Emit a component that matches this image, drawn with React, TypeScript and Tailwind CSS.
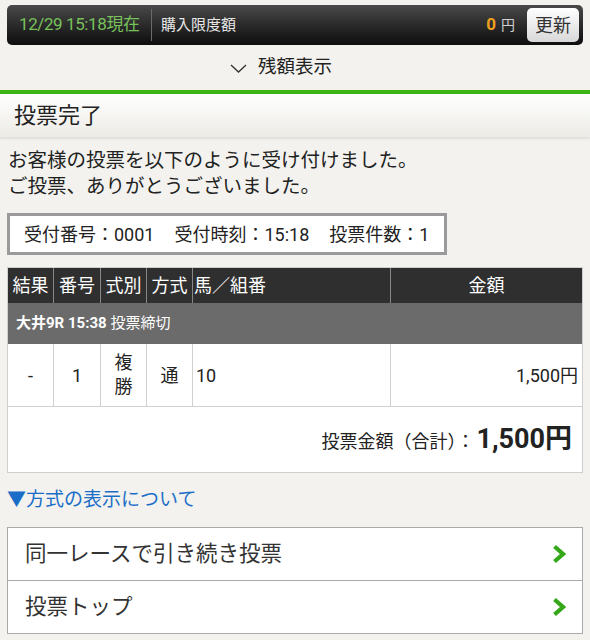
const font = { fontFamily: 'Roboto, "Noto Sans CJK JP", sans-serif' };

function Chevron() {
  return (
    <svg width="14" height="20" viewBox="0 0 14 20" className="shrink-0">
      <path d="M2.5 2.5 L11 10 L2.5 17.5" fill="none" stroke="#35a81a" strokeWidth="4.2" strokeLinejoin="miter" />
    </svg>
  );
}

function DownCaret() {
  return (
    <svg width="17" height="9" viewBox="0 0 17 9" className="shrink-0 mt-[1px]">
      <path d="M1 1 L8.5 8 L16 1" fill="none" stroke="#333" strokeWidth="1.3" />
    </svg>
  );
}

export default function App() {
  return (
    <div className="w-[590px] h-[640px] overflow-hidden bg-[#f3f2ee] text-[#222]" style={font}>
      {/* balance bar */}
      <div className="px-[7px] pt-[5px]">
        <div className="flex items-center h-[40px] rounded-[5px] bg-gradient-to-b from-[#4a4a4a] to-[#0e0e0e]">
          <div className="w-[144px] pl-[12px] text-[17px] text-[#78c15a] tracking-[-0.4px] whitespace-nowrap">12/29 15:18現在</div>
          <div className="w-px h-[32px] bg-[#6a6a6a]" />
          <div className="flex-1 pl-[9px] text-[15px] text-[#e6e6e6]">購入限度額</div>
          <div className="text-[17px] font-bold text-[#f0a020]">0</div>
          <div className="ml-[5px] text-[14px] text-[#cfcfcf]">円</div>
          <div className="ml-[12px] mr-[4px] w-[52px] h-[34px] rounded-[5px] bg-gradient-to-b from-white to-[#d8d8d8] flex items-center justify-center text-[18px] text-[#333]">
            更新
          </div>
        </div>
      </div>
      <div className="h-[45px] flex items-center justify-center gap-[11px] pr-[28px] text-[18.5px] text-[#222]">
        <DownCaret />
        <span>残額表示</span>
      </div>

      {/* heading */}
      <div className="h-[4px] bg-[#3cb414]" />
      <div className="h-[43px] flex items-center pl-[14px] text-[22px] text-[#222] bg-gradient-to-b from-white to-[#ecebe6] shadow-[0_2px_2px_rgba(0,0,0,0.08)]">
        投票完了
      </div>

      <div className="px-[7px]">
        <p className="pt-[11px] pl-[1px] text-[19.5px] leading-[26px]">
          お客様の投票を以下のように受け付けました。
          <br />
          ご投票、ありがとうございました。
        </p>

        <div className="mt-[13px] w-[440px] h-[42px] border-[3px] border-[#9a9a9a] bg-white flex items-center pl-[14px] text-[18px] gap-[20px]">
          <span>受付番号：0001</span>
          <span>受付時刻：15:18</span>
          <span>投票件数：1</span>
        </div>

        {/* table */}
        <div className="mt-[12px] border border-[#cfcfcf] bg-white">
          <div className="grid grid-cols-[46px_47px_46px_46px_198px_1fr] h-[35px] bg-[#2f2f2f] text-white text-[18px]">
            <div className="flex items-center justify-center border-r border-[#888]">結果</div>
            <div className="flex items-center justify-center border-r border-[#888]">番号</div>
            <div className="flex items-center justify-center border-r border-[#888]">式別</div>
            <div className="flex items-center justify-center border-r border-[#888]">方式</div>
            <div className="flex items-center pl-[1px] border-r border-[#888]">馬／組番</div>
            <div className="flex items-center justify-center">金額</div>
          </div>
          <div className="h-[41px] bg-[#6b6b6b] text-white text-[15px] flex items-center pl-[8px]">
            <span className="font-bold">大井9R 15:38</span>
            <span className="ml-[4px]">投票締切</span>
          </div>
          <div className="grid grid-cols-[46px_47px_46px_46px_198px_1fr] h-[63px] text-[18px] border-b border-[#d0d0d0]">
            <div className="flex items-center justify-center border-r border-[#d0d0d0]">-</div>
            <div className="flex items-center justify-center border-r border-[#d0d0d0]">1</div>
            <div className="flex items-center justify-center text-center leading-[24px] border-r border-[#d0d0d0]">
              複<br />勝
            </div>
            <div className="flex items-center justify-center border-r border-[#d0d0d0]">通</div>
            <div className="flex items-center pl-[3px] border-r border-[#d0d0d0]">10</div>
            <div className="flex items-center justify-end pr-[4px]">1,500円</div>
          </div>
          <div className="h-[65px] flex items-center justify-end pr-[10px]">
            <span className="text-[18px] mt-[3px]">投票金額（合計）：</span>
            <span className="text-[27px] font-bold ml-[2px]">1,500円</span>
          </div>
        </div>

        <div className="mt-[12px] h-[30px] flex items-center text-[19px] text-[#1b6ec8]">▼方式の表示について</div>

        {/* links */}
        <div className="mt-[12px] border border-[#aaa] bg-white">
          <div className="h-[53px] flex items-center justify-between pl-[17px] pr-[16px] border-b border-[#aaa] text-[21.5px] text-[#333]">
            <span>同一レースで引き続き投票</span>
            <Chevron />
          </div>
          <div className="h-[52px] flex items-center justify-between pl-[17px] pr-[16px] text-[21.5px] text-[#333]">
            <span>投票トップ</span>
            <Chevron />
          </div>
        </div>
      </div>
    </div>
  );
}
